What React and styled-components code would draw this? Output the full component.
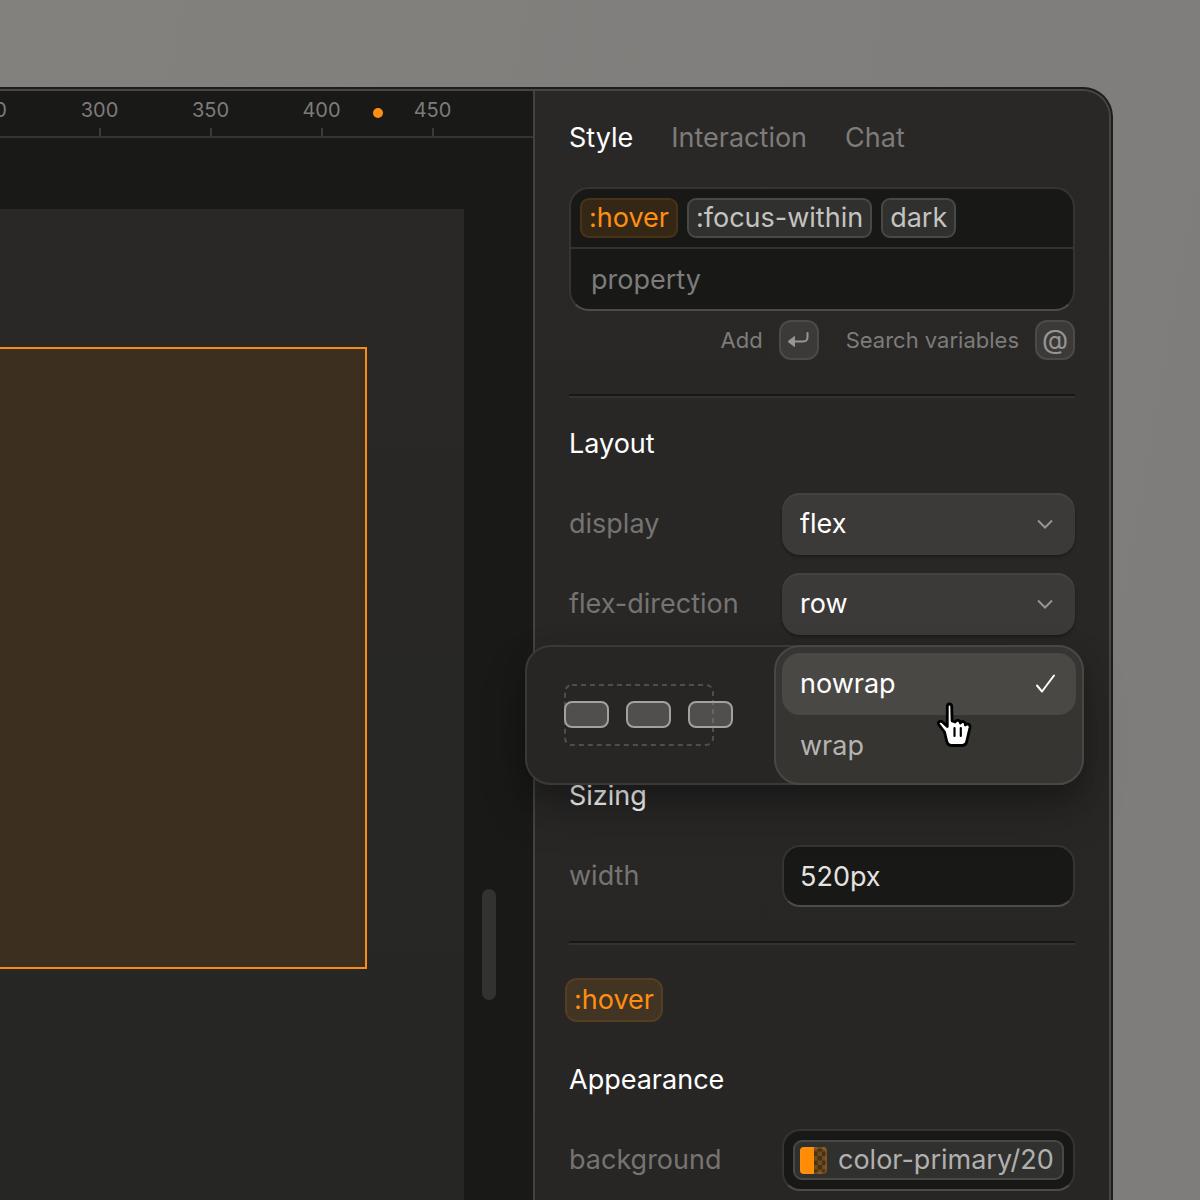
import React, { useState } from 'react';
import styled, { createGlobalStyle, css } from 'styled-components';

const GlobalStyle = createGlobalStyle`
  *, *::before, *::after {
    box-sizing: border-box;
  }

  body {
    margin: 0;
    background: #7f7e7b;
    font-family: Inter, 'Liberation Sans', sans-serif;
    font-size: 27px;
    line-height: 32px;
    color: #fff;
  }

  button, input, select {
    font: inherit;
    color: inherit;
    margin: 0;
  }
`;

const Page = styled.main`
  display: flex;
  min-height: 100vh;
  overflow: hidden;
  padding: 87px 87px 0 0;
  background: linear-gradient(100deg, #82817e, #7e7d7b);
`;

/* Dark outer hairline, lighter one inside it */
const Window = styled.div`
  flex: 1;
  display: flex;
  min-width: 0;
  border: solid #1d1d1b;
  border-width: 2px 2px 0 0;
  border-radius: 0 30px 0 0;
  background: #1d1d1b;
`;

const Frame = styled.div`
  flex: 1;
  display: flex;
  min-width: 0;
  border: solid #474644;
  border-width: 2px 2px 0 0;
  border-radius: 0 28px 0 0;
  background: #282726;
`;

const Workspace = styled.section`
  flex: 1;
  display: flex;
  flex-direction: column;
  min-width: 0;
  overflow: hidden;
  background: #191917;
`;

const Ruler = styled.div`
  position: relative;
  display: flex;
  flex-shrink: 0;
  justify-content: flex-end;
  height: 47px;
  padding-right: 45px;
  border-bottom: 2px solid #343432;
`;

const Mark = styled.div`
  display: flex;
  flex-direction: column;
  flex-shrink: 0;
  align-items: center;
  justify-content: space-between;
  width: 111px;
  padding-top: 7px;
  font-size: 20px;
  line-height: 24px;
  color: #7d7c7a;

  &::after {
    content: '';
    width: 2px;
    height: 8px;
    background: #3a3a38;
  }
`;

const Playhead = styled.span`
  position: absolute;
  top: 17px;
  right: 150px;
  width: 10px;
  height: 10px;
  border-radius: 50%;
  background: #ff8f12;
`;

const Canvas = styled.div`
  flex: 1;
  display: flex;
  min-height: 0;
  padding-top: 71px;
`;

const Artboard = styled.div`
  flex: 1;
  padding: 138px 97px 0 0;
  background: linear-gradient(#292827, #262625);
`;

const Selection = styled.div`
  height: 622px;
  border: 2px solid #f98c17;
  border-left: 0;
  background: #3c2f20;
`;

const Gutter = styled.div`
  width: 69px;
  padding: 680px 0 0 18px;
`;

const ScrollThumb = styled.div`
  width: 14px;
  height: 111px;
  border-radius: 7px;
  background: #323230;
`;

const Panel = styled.aside`
  display: flex;
  flex-direction: column;
  flex-shrink: 0;
  width: 576px;
  padding: 31px 34px 0;
  border-left: 2px solid #434240;
  border-top-right-radius: 26px;
  background: linear-gradient(#292827, #272625);
`;

const Tabs = styled.div`
  display: flex;
  gap: 38px;
  margin-bottom: 33px;
`;

const Tab = styled.button`
  padding: 0;
  border: 0;
  background: none;
  color: ${(props) => (props.$active ? '#fff' : '#7d7c7a')};
  cursor: pointer;
`;

const fieldBorder = css`
  border: 2px solid #353432;
  border-bottom-color: #4c4b49;
  background: #181817;
`;

const Finder = styled.div`
  ${fieldBorder}
  overflow: hidden;
  border-radius: 20px;
`;

const FinderChips = styled.div`
  display: flex;
  gap: 9px;
  padding: 9px;
  border-bottom: 2px solid #32312f;
`;

const FinderInput = styled.input`
  display: block;
  width: 100%;
  height: 60px;
  padding: 0 20px;
  border: 0;
  outline: 0;
  background: none;

  &::placeholder {
    color: #7d7c7a;
    opacity: 1;
  }
`;

const Chip = styled.button`
  display: flex;
  align-items: center;
  height: 40px;
  padding: 0 7px;
  border: 2px solid ${(props) => (props.$accent ? 'rgba(255, 143, 18, 0.1)' : '#484846')};
  border-radius: 9px;
  background: ${(props) => (props.$accent ? 'rgba(255, 143, 18, 0.13)' : '#30302e')};
  color: ${(props) => (props.$accent ? '#ff8f12' : '#c4c3c1')};
  cursor: pointer;
`;

const StateChip = styled(Chip)`
  align-self: flex-start;
  height: 44px;
  margin: 33px 0 0 -4px;
  border-radius: 12px;
`;

const Hints = styled.div`
  display: flex;
  justify-content: flex-end;
  gap: 27px;
  margin-top: 9px;
  font-size: 22px;
  color: #7d7c7a;
`;

const Hint = styled.div`
  display: flex;
  align-items: center;
  gap: 16px;
`;

const Key = styled.kbd`
  display: grid;
  place-items: center;
  width: 40px;
  height: 40px;
  border: 2px solid #4b4a48;
  border-radius: 12px;
  background: #3b3a39;
  color: #979694;
  font-family: inherit;
  font-size: 27px;
`;

const Divider = styled.hr`
  width: 100%;
  height: 4px;
  margin: 34px 0 0;
  border: solid;
  border-width: 2px 0;
  border-color: #171716 transparent #333230;
`;

const Heading = styled.h2`
  margin: ${(props) => props.$space}px 0 33px;
  font-size: 27px;
  font-weight: 400;
  line-height: 32px;
`;

const Rows = styled.div`
  display: flex;
  flex-direction: column;
  gap: 18px;
`;

const Row = styled.div`
  position: relative;
  display: grid;
  grid-template-columns: 1fr 293px;
  align-items: center;
  min-height: 62px;
  color: #757472;
`;

const SelectBox = styled.div`
  display: grid;
  grid-template-columns: 1fr 42px;
  align-items: center;
  border-radius: 18px;
  background: #3b3a39;
  box-shadow: inset 0 2px 0 #444341, 0 2px 3px rgba(0, 0, 0, 0.3);
  color: #fff;

  svg {
    grid-area: 1 / 2;
    pointer-events: none;
  }
`;

const Select = styled.select`
  grid-area: 1 / 1 / 2 / 3;
  appearance: none;
  height: 62px;
  padding: 0 18px;
  border: 0;
  border-radius: 18px;
  outline: 0;
  background: none;
`;

const TextField = styled.input`
  ${fieldBorder}
  width: 100%;
  height: 62px;
  padding: 0 16px;
  border-radius: 18px;
  outline: 0;
  color: #e4e3e1;
`;

const ValueField = styled.div`
  ${fieldBorder}
  height: 62px;
  padding: 9px;
  border-radius: 18px;
`;

const ValueChip = styled(Chip)`
  gap: 11px;
  width: 100%;
  padding: 0 5px;
  color: #b1b0ae;
  white-space: nowrap;
`;

const Popover = styled.div`
  position: absolute;
  z-index: 1;
  top: -8px;
  left: -44px;
  right: -9px;
  display: grid;
  grid-template-columns: 1fr 306px;
  border: 2px solid #3a3937;
  border-radius: 26px;
  background: #272625;
  box-shadow: 0 24px 48px rgba(0, 0, 0, 0.2), 0 12px 24px rgba(0, 0, 0, 0.2);
`;

const Preview = styled.div`
  display: flex;
  align-items: center;
  padding-left: 37px;
`;

const Options = styled.div`
  margin: -2px;
  padding: 6px;
  border: 2px solid #484743;
  border-radius: 26px;
  background: #363531;
`;

const Option = styled.button`
  display: flex;
  align-items: center;
  justify-content: space-between;
  width: 100%;
  height: 62px;
  padding: 0 20px 0 18px;
  border: 0;
  border-radius: 18px;
  background: ${(props) => (props.$active ? '#494844' : 'none')};
  color: ${(props) => (props.$active ? '#fff' : '#b5b4b1')};
  cursor: pointer;
`;

const Pointer = styled.svg`
  position: absolute;
  z-index: 2;
  top: 48px;
  right: 102px;
  pointer-events: none;
`;

const Chevron = () => (
  <svg width="24" height="24" viewBox="0 0 24 24" fill="none" stroke="#969593" strokeWidth="2" aria-hidden="true">
    <path d="M5 8.5l7 7 7-7" />
  </svg>
);

const Check = () => (
  <svg width="22" height="22" viewBox="0 0 22 22" fill="none" stroke="currentColor" strokeWidth="2" strokeLinecap="round" strokeLinejoin="round" aria-hidden="true">
    <path d="M3 12.5l5 6L20 2.5" />
  </svg>
);

const ReturnIcon = () => (
  <svg width="24" height="20" viewBox="0 0 24 20" fill="none" aria-label="Enter">
    <path d="M20.5 3v4.500a4 4 0 0 1-4 4H8" stroke="currentColor" strokeWidth="2" strokeLinecap="round" />
    <path d="M1 11.500l6.500-5v10z" fill="currentColor" stroke="currentColor" strokeLinejoin="round" />
  </svg>
);

const WrapPreview = () => (
  <svg width="170" height="64" viewBox="0 0 170 64" fill="none" aria-hidden="true">
    <rect x="1" y="2" width="148" height="60" rx="7" stroke="#4f4e4c" strokeWidth="2" strokeDasharray="5 4" />
    {[1, 63, 125].map((x) => (
      <rect key={x} x={x} y="19" width="43" height="25" rx="7" fill="#8a8987" fillOpacity="0.42" stroke="#a2a19f" strokeWidth="2" />
    ))}
  </svg>
);

const Swatch = () => (
  <svg width="27" height="27" viewBox="0 0 27 27" aria-hidden="true">
    <defs>
      <clipPath id="swatch">
        <rect width="27" height="27" rx="4" />
      </clipPath>
      <pattern id="checker" x="13" width="9" height="9" patternUnits="userSpaceOnUse">
        <rect width="9" height="9" fill="#4a310f" />
        <path d="M0 0h4.500v9H9V4.500H0z" fill="#6b4c27" />
      </pattern>
    </defs>
    <g clipPath="url(#swatch)">
      <rect width="27" height="27" fill="url(#checker)" />
      <rect width="14" height="27" fill="#ff8c05" />
    </g>
    <rect x="1" y="1" width="25" height="25" rx="3" fill="none" stroke="#ff9d33" strokeOpacity="0.2" strokeWidth="2" />
  </svg>
);

const HandPointer = () => (
  <Pointer width="38" height="48" viewBox="0 0 38 48" aria-hidden="true">
    <path
      d="M14.500 3c-1.500 0-2.200 1.100-2.200 2.500v20L7.500 21C5.500 19.300 2.300 21 3.600 23.300L9.500 31l2.300 9.500c.6 2.800 1.700 4 4.200 4h11.500c2.500 0 3.700-1.200 4.200-4L35 26.500c.6-3-2.900-4.700-4.600-2.500.3-3.400-3.400-4.600-5-2-.4-2.900-4-3.500-5.200-1l-3.100-1L16.700 5.500C16.700 4.100 16 3 14.500 3z"
      fill="#fff"
      stroke="#000"
      strokeWidth="2.800"
      strokeLinejoin="round"
    />
    <path d="M19.500 27v8M25.800 27v8" stroke="#000" strokeWidth="2.200" strokeLinecap="round" />
  </Pointer>
);

const marks = [250, 300, 350, 400, 450];
const tabs = ['Style', 'Interaction', 'Chat'];

const SelectRow = ({ name, options }) => (
  <Row>
    <label htmlFor={name}>{name}</label>
    <SelectBox>
      <Select id={name}>
        {options.map((option) => (
          <option key={option}>{option}</option>
        ))}
      </Select>
      <Chevron />
    </SelectBox>
  </Row>
);

const App = () => {
  const [tab, setTab] = useState('Style');
  const [wrap, setWrap] = useState('nowrap');

  return (
    <>
      <GlobalStyle />
      <Page>
        <Window>
          <Frame>
            <Workspace>
              <Ruler>
                {marks.map((mark) => (
                  <Mark key={mark}>{mark}</Mark>
                ))}
                <Playhead />
              </Ruler>
              <Canvas>
                <Artboard>
                  <Selection />
                </Artboard>
                <Gutter>
                  <ScrollThumb />
                </Gutter>
              </Canvas>
            </Workspace>

            <Panel>
              <Tabs role="tablist">
                {tabs.map((name) => (
                  <Tab key={name} role="tab" aria-selected={tab === name} $active={tab === name} onClick={() => setTab(name)}>
                    {name}
                  </Tab>
                ))}
              </Tabs>

              <Finder>
                <FinderChips>
                  <Chip $accent>:hover</Chip>
                  <Chip>:focus-within</Chip>
                  <Chip>dark</Chip>
                </FinderChips>
                <FinderInput placeholder="property" aria-label="property" />
              </Finder>
              <Hints>
                <Hint>
                  Add
                  <Key>
                    <ReturnIcon />
                  </Key>
                </Hint>
                <Hint>
                  Search variables
                  <Key>@</Key>
                </Hint>
              </Hints>

              <Divider />
              <Heading $space={30}>Layout</Heading>
              <Rows>
                <SelectRow name="display" options={['flex', 'block', 'grid']} />
                <SelectRow name="flex-direction" options={['row', 'column']} />
                <Row>
                  <Popover>
                    <Preview>
                      <WrapPreview />
                    </Preview>
                    <Options role="listbox" aria-label="flex-wrap">
                      {['nowrap', 'wrap'].map((value) => (
                        <Option key={value} role="option" aria-selected={wrap === value} $active={wrap === value} onClick={() => setWrap(value)}>
                          {value}
                          {wrap === value && <Check />}
                        </Option>
                      ))}
                    </Options>
                  </Popover>
                  <HandPointer />
                </Row>
              </Rows>

              <Heading $space={65}>Sizing</Heading>
              <Row>
                <label htmlFor="width">width</label>
                <TextField id="width" defaultValue="520px" />
              </Row>

              <Divider />
              <StateChip $accent>:hover</StateChip>
              <Heading $space={42}>Appearance</Heading>
              <Row>
                <span id="background-label">background</span>
                <ValueField>
                  <ValueChip aria-describedby="background-label">
                    <Swatch />
                    color-primary/20
                  </ValueChip>
                </ValueField>
              </Row>
            </Panel>
          </Frame>
        </Window>
      </Page>
    </>
  );
};

export default App;
